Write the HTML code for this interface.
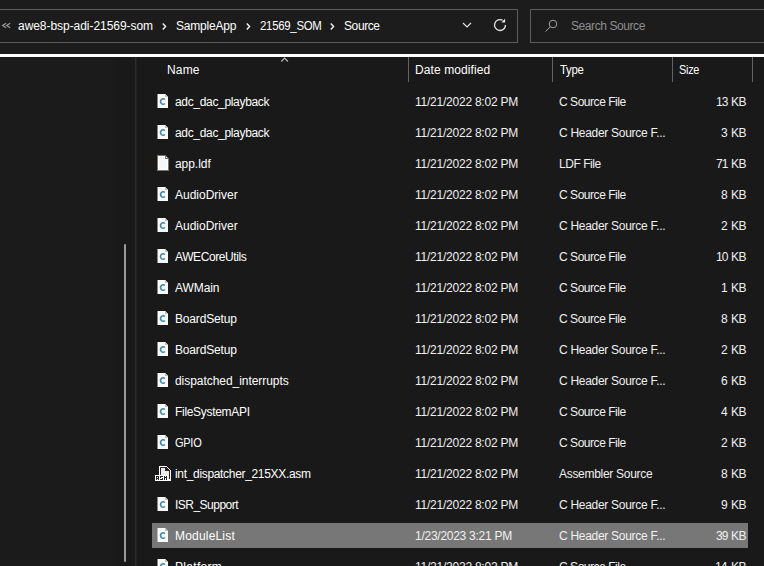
<!DOCTYPE html>
<html><head><meta charset="utf-8"><style>
*{margin:0;padding:0;box-sizing:border-box}
html,body{width:764px;height:566px;overflow:hidden;background:#1c1c1c;font-family:"Liberation Sans",sans-serif;font-size:12px;color:#fff}
.abs{position:absolute}
#crumb{position:absolute;left:-2px;top:9px;width:520px;height:34px;border:1px solid #5c5c5c;background:#1c1c1c}
#search{position:absolute;left:530px;top:9px;width:260px;height:34px;border:1px solid #5c5c5c;background:#1c1c1c}
#wline{position:absolute;left:0;top:54px;width:764px;height:3px;background:#fff}
#content{position:absolute;left:0;top:57px;width:764px;height:509px;background:#191919}
#navsep{position:absolute;left:134px;top:57px;width:3px;height:509px;background:linear-gradient(90deg,#1b1b1b 0,#1b1b1b 1px,#2b2b2b 1px,#2b2b2b 2px,#222 2px)}
#thumb{position:absolute;left:124px;top:244px;width:2px;height:318px;border-radius:1px;background:#9a9a9a}
.hd{position:absolute;line-height:14px;color:#fff;white-space:pre}
.csep{position:absolute;top:57px;width:1px;height:25px;background:#636363}
.selbar{position:absolute;left:152px;width:596px;height:25px;background:#777}
.t{position:absolute;line-height:14px;white-space:pre}
.nm{color:#fff}
.dt,.ty,.sz{color:#f0f0f0}
.icw{position:absolute;left:157px;margin-top:6px;width:11px;height:14px}
.icp{margin-top:5px;width:12px;height:16px}
.ica{left:153px;margin-top:4px;width:20px;height:20px}
.ic{display:block}
.bc{position:absolute;line-height:14px;color:#fff;white-space:pre}
</style></head><body>
<div id="crumb"></div>
<div id="search"></div>
<svg class="abs" style="left:0;top:0" width="764" height="54">
 <path d="M6.1 23.2L2.6 25.5L6.1 27.8M10.2 23.2L6.7 25.5L10.2 27.8" fill="none" stroke="#9a9a9a" stroke-width="1.2"/>
 <path d="M162.8 23.6L165.6 26.6L162.8 29.6" fill="none" stroke="#f2f2f2" stroke-width="1.4"/>
 <path d="M246.8 23.6L249.6 26.6L246.8 29.6" fill="none" stroke="#f2f2f2" stroke-width="1.4"/>
 <path d="M330.8 23.6L333.6 26.6L330.8 29.6" fill="none" stroke="#f2f2f2" stroke-width="1.4"/>
 <path d="M463 23L467 27L471 23" fill="none" stroke="#e8e8e8" stroke-width="1.1"/>
 <path d="M505.45 25A5.45 5.45 0 1 1 502.7 20.3" fill="none" stroke="#e6e6e6" stroke-width="1.3"/>
 <path d="M501.3 22.5L505.1 22.5L505.1 18.7Z" fill="#e6e6e6"/>
 <circle cx="553" cy="24" r="3.8" fill="none" stroke="#a0a0a0" stroke-width="1"/>
 <path d="M550.3 26.8L545.5 31.5" stroke="#a0a0a0" stroke-width="1"/>
</svg>
<div class="bc" style="left:18px;top:19px;letter-spacing:-0.048px">awe8-bsp-adi-21569-som</div>
<div class="bc" style="left:176px;top:19px;letter-spacing:-0.2px">SampleApp</div>
<div class="bc" style="left:260px;top:19px;letter-spacing:-0.3px;transform:scaleX(0.9516);transform-origin:0 0">21569_SOM</div>
<div class="bc" style="left:344px;top:19px;letter-spacing:-0.4px">Source</div>
<div class="bc" style="left:571px;top:19px;letter-spacing:-0.417px;color:#8e8e8e">Search Source</div>
<div id="wline"></div>
<div id="content"></div>
<div style="position:absolute;left:0;top:57px;width:116px;height:509px;background:#1b1b1b"></div>
<div id="navsep"></div>
<div id="thumb"></div>
<div class="hd" style="left:167px;top:63px;letter-spacing:0.167px">Name</div>
<svg class="abs" style="left:279px;top:55px" width="12" height="8"><path d="M2.3 6.5L5.6 3L8.9 6.5" fill="none" stroke="#bdbdbd" stroke-width="1.1"/></svg>
<div class="hd" style="left:415px;top:63px;letter-spacing:0.1px">Date modified</div>
<div class="hd" style="left:560px;top:63px;letter-spacing:-0.3px;transform:scaleX(0.948);transform-origin:0 0">Type</div>
<div class="hd" style="left:679px;top:63px;letter-spacing:-0.3px;transform:scaleX(0.9091);transform-origin:0 0">Size</div>
<div class="csep" style="left:408px"></div>
<div class="csep" style="left:552px"></div>
<div class="csep" style="left:672px"></div>
<div class="csep" style="left:752px"></div>
<div class="icw icc" style="top:88px"><svg class="ic" style="margin-left:0px;margin-top:0px" width="11" height="14" viewBox="0 0 11 14" shape-rendering="crispEdges"><rect x="0" y="0" width="1" height="14" fill="#f6f6f6" fill-opacity="0.5"/><path d="M1 0H8V3H11V14H1Z" fill="#fafafa"/><path d="M8 0L11 3H8Z" fill="#bdbdbd"/><path d="M7.9 5.55A2.5 2.75 0 1 0 7.9 9.45" fill="none" stroke="#3b88a8" stroke-width="1.5" shape-rendering="geometricPrecision"/></svg></div>
<div class="t nm" style="left:175px;top:95px;letter-spacing:-0.327px">adc_dac_playback</div>
<div class="t dt" style="left:415px;top:95px;letter-spacing:-0.235px">11/21/2022 8:02 PM</div>
<div class="t ty" style="left:559px;top:95px;letter-spacing:-0.458px">C Source File</div>
<div class="t sz" style="left:716px;top:95px;letter-spacing:-0.9px">13</div>
<div class="t sz" style="left:731px;top:95px;letter-spacing:-0.6px">KB</div>
<div class="icw icc" style="top:119px"><svg class="ic" style="margin-left:0px;margin-top:0px" width="11" height="14" viewBox="0 0 11 14" shape-rendering="crispEdges"><rect x="0" y="0" width="1" height="14" fill="#f6f6f6" fill-opacity="0.5"/><path d="M1 0H8V3H11V14H1Z" fill="#fafafa"/><path d="M8 0L11 3H8Z" fill="#bdbdbd"/><path d="M7.9 5.55A2.5 2.75 0 1 0 7.9 9.45" fill="none" stroke="#3b88a8" stroke-width="1.5" shape-rendering="geometricPrecision"/></svg></div>
<div class="t nm" style="left:175px;top:126px;letter-spacing:-0.327px">adc_dac_playback</div>
<div class="t dt" style="left:415px;top:126px;letter-spacing:-0.235px">11/21/2022 8:02 PM</div>
<div class="t ty" style="left:559px;top:126px;letter-spacing:-0.289px">C Header Source F...</div>
<div class="t sz" style="left:721px;top:126px;letter-spacing:-0.9px">3</div>
<div class="t sz" style="left:731px;top:126px;letter-spacing:-0.6px">KB</div>
<div class="icw icp" style="top:150px"><svg class="ic" width="12" height="16" viewBox="0 0 12 16" shape-rendering="crispEdges"><path d="M0 0H8L12 4V16H0Z" fill="#77726b"/><path d="M1 1H8V4H11V15H1Z" fill="#ffffff"/><path d="M2 2H7V5H10V14H2Z" fill="#f7f7f7"/><path d="M9 2L10 3V3H9Z" fill="#ffffff"/></svg></div>
<div class="t nm" style="left:175px;top:157px;letter-spacing:-0.05px">app.ldf</div>
<div class="t dt" style="left:415px;top:157px;letter-spacing:-0.235px">11/21/2022 8:02 PM</div>
<div class="t ty" style="left:559px;top:157px;letter-spacing:-0.457px">LDF File</div>
<div class="t sz" style="left:716px;top:157px;letter-spacing:-0.9px">71</div>
<div class="t sz" style="left:731px;top:157px;letter-spacing:-0.6px">KB</div>
<div class="icw icc" style="top:181px"><svg class="ic" style="margin-left:0px;margin-top:0px" width="11" height="14" viewBox="0 0 11 14" shape-rendering="crispEdges"><rect x="0" y="0" width="1" height="14" fill="#f6f6f6" fill-opacity="0.5"/><path d="M1 0H8V3H11V14H1Z" fill="#fafafa"/><path d="M8 0L11 3H8Z" fill="#bdbdbd"/><path d="M7.9 5.55A2.5 2.75 0 1 0 7.9 9.45" fill="none" stroke="#3b88a8" stroke-width="1.5" shape-rendering="geometricPrecision"/></svg></div>
<div class="t nm" style="left:175px;top:188px;letter-spacing:0.0px">AudioDriver</div>
<div class="t dt" style="left:415px;top:188px;letter-spacing:-0.235px">11/21/2022 8:02 PM</div>
<div class="t ty" style="left:559px;top:188px;letter-spacing:-0.458px">C Source File</div>
<div class="t sz" style="left:721px;top:188px;letter-spacing:-0.9px">8</div>
<div class="t sz" style="left:731px;top:188px;letter-spacing:-0.6px">KB</div>
<div class="icw icc" style="top:212px"><svg class="ic" style="margin-left:0px;margin-top:0px" width="11" height="14" viewBox="0 0 11 14" shape-rendering="crispEdges"><rect x="0" y="0" width="1" height="14" fill="#f6f6f6" fill-opacity="0.5"/><path d="M1 0H8V3H11V14H1Z" fill="#fafafa"/><path d="M8 0L11 3H8Z" fill="#bdbdbd"/><path d="M7.9 5.55A2.5 2.75 0 1 0 7.9 9.45" fill="none" stroke="#3b88a8" stroke-width="1.5" shape-rendering="geometricPrecision"/></svg></div>
<div class="t nm" style="left:175px;top:219px;letter-spacing:0.0px">AudioDriver</div>
<div class="t dt" style="left:415px;top:219px;letter-spacing:-0.235px">11/21/2022 8:02 PM</div>
<div class="t ty" style="left:559px;top:219px;letter-spacing:-0.289px">C Header Source F...</div>
<div class="t sz" style="left:721px;top:219px;letter-spacing:-0.9px">2</div>
<div class="t sz" style="left:731px;top:219px;letter-spacing:-0.6px">KB</div>
<div class="icw icc" style="top:243px"><svg class="ic" style="margin-left:0px;margin-top:0px" width="11" height="14" viewBox="0 0 11 14" shape-rendering="crispEdges"><rect x="0" y="0" width="1" height="14" fill="#f6f6f6" fill-opacity="0.5"/><path d="M1 0H8V3H11V14H1Z" fill="#fafafa"/><path d="M8 0L11 3H8Z" fill="#bdbdbd"/><path d="M7.9 5.55A2.5 2.75 0 1 0 7.9 9.45" fill="none" stroke="#3b88a8" stroke-width="1.5" shape-rendering="geometricPrecision"/></svg></div>
<div class="t nm" style="left:175px;top:250px;letter-spacing:-0.409px">AWECoreUtils</div>
<div class="t dt" style="left:415px;top:250px;letter-spacing:-0.235px">11/21/2022 8:02 PM</div>
<div class="t ty" style="left:559px;top:250px;letter-spacing:-0.458px">C Source File</div>
<div class="t sz" style="left:716px;top:250px;letter-spacing:-0.9px">10</div>
<div class="t sz" style="left:731px;top:250px;letter-spacing:-0.6px">KB</div>
<div class="icw icc" style="top:274px"><svg class="ic" style="margin-left:0px;margin-top:0px" width="11" height="14" viewBox="0 0 11 14" shape-rendering="crispEdges"><rect x="0" y="0" width="1" height="14" fill="#f6f6f6" fill-opacity="0.5"/><path d="M1 0H8V3H11V14H1Z" fill="#fafafa"/><path d="M8 0L11 3H8Z" fill="#bdbdbd"/><path d="M7.9 5.55A2.5 2.75 0 1 0 7.9 9.45" fill="none" stroke="#3b88a8" stroke-width="1.5" shape-rendering="geometricPrecision"/></svg></div>
<div class="t nm" style="left:175px;top:281px;letter-spacing:-0.08px">AWMain</div>
<div class="t dt" style="left:415px;top:281px;letter-spacing:-0.235px">11/21/2022 8:02 PM</div>
<div class="t ty" style="left:559px;top:281px;letter-spacing:-0.458px">C Source File</div>
<div class="t sz" style="left:721px;top:281px;letter-spacing:-0.9px">1</div>
<div class="t sz" style="left:731px;top:281px;letter-spacing:-0.6px">KB</div>
<div class="icw icc" style="top:305px"><svg class="ic" style="margin-left:0px;margin-top:0px" width="11" height="14" viewBox="0 0 11 14" shape-rendering="crispEdges"><rect x="0" y="0" width="1" height="14" fill="#f6f6f6" fill-opacity="0.5"/><path d="M1 0H8V3H11V14H1Z" fill="#fafafa"/><path d="M8 0L11 3H8Z" fill="#bdbdbd"/><path d="M7.9 5.55A2.5 2.75 0 1 0 7.9 9.45" fill="none" stroke="#3b88a8" stroke-width="1.5" shape-rendering="geometricPrecision"/></svg></div>
<div class="t nm" style="left:175px;top:312px;letter-spacing:-0.167px">BoardSetup</div>
<div class="t dt" style="left:415px;top:312px;letter-spacing:-0.235px">11/21/2022 8:02 PM</div>
<div class="t ty" style="left:559px;top:312px;letter-spacing:-0.458px">C Source File</div>
<div class="t sz" style="left:721px;top:312px;letter-spacing:-0.9px">8</div>
<div class="t sz" style="left:731px;top:312px;letter-spacing:-0.6px">KB</div>
<div class="icw icc" style="top:336px"><svg class="ic" style="margin-left:0px;margin-top:0px" width="11" height="14" viewBox="0 0 11 14" shape-rendering="crispEdges"><rect x="0" y="0" width="1" height="14" fill="#f6f6f6" fill-opacity="0.5"/><path d="M1 0H8V3H11V14H1Z" fill="#fafafa"/><path d="M8 0L11 3H8Z" fill="#bdbdbd"/><path d="M7.9 5.55A2.5 2.75 0 1 0 7.9 9.45" fill="none" stroke="#3b88a8" stroke-width="1.5" shape-rendering="geometricPrecision"/></svg></div>
<div class="t nm" style="left:175px;top:343px;letter-spacing:-0.167px">BoardSetup</div>
<div class="t dt" style="left:415px;top:343px;letter-spacing:-0.235px">11/21/2022 8:02 PM</div>
<div class="t ty" style="left:559px;top:343px;letter-spacing:-0.289px">C Header Source F...</div>
<div class="t sz" style="left:721px;top:343px;letter-spacing:-0.9px">2</div>
<div class="t sz" style="left:731px;top:343px;letter-spacing:-0.6px">KB</div>
<div class="icw icc" style="top:367px"><svg class="ic" style="margin-left:0px;margin-top:0px" width="11" height="14" viewBox="0 0 11 14" shape-rendering="crispEdges"><rect x="0" y="0" width="1" height="14" fill="#f6f6f6" fill-opacity="0.5"/><path d="M1 0H8V3H11V14H1Z" fill="#fafafa"/><path d="M8 0L11 3H8Z" fill="#bdbdbd"/><path d="M7.9 5.55A2.5 2.75 0 1 0 7.9 9.45" fill="none" stroke="#3b88a8" stroke-width="1.5" shape-rendering="geometricPrecision"/></svg></div>
<div class="t nm" style="left:175px;top:374px;letter-spacing:-0.05px">dispatched_interrupts</div>
<div class="t dt" style="left:415px;top:374px;letter-spacing:-0.235px">11/21/2022 8:02 PM</div>
<div class="t ty" style="left:559px;top:374px;letter-spacing:-0.289px">C Header Source F...</div>
<div class="t sz" style="left:721px;top:374px;letter-spacing:-0.9px">6</div>
<div class="t sz" style="left:731px;top:374px;letter-spacing:-0.6px">KB</div>
<div class="icw icc" style="top:398px"><svg class="ic" style="margin-left:0px;margin-top:0px" width="11" height="14" viewBox="0 0 11 14" shape-rendering="crispEdges"><rect x="0" y="0" width="1" height="14" fill="#f6f6f6" fill-opacity="0.5"/><path d="M1 0H8V3H11V14H1Z" fill="#fafafa"/><path d="M8 0L11 3H8Z" fill="#bdbdbd"/><path d="M7.9 5.55A2.5 2.75 0 1 0 7.9 9.45" fill="none" stroke="#3b88a8" stroke-width="1.5" shape-rendering="geometricPrecision"/></svg></div>
<div class="t nm" style="left:175px;top:405px;letter-spacing:-0.308px">FileSystemAPI</div>
<div class="t dt" style="left:415px;top:405px;letter-spacing:-0.235px">11/21/2022 8:02 PM</div>
<div class="t ty" style="left:559px;top:405px;letter-spacing:-0.458px">C Source File</div>
<div class="t sz" style="left:721px;top:405px;letter-spacing:-0.9px">4</div>
<div class="t sz" style="left:731px;top:405px;letter-spacing:-0.6px">KB</div>
<div class="icw icc" style="top:429px"><svg class="ic" style="margin-left:0px;margin-top:0px" width="11" height="14" viewBox="0 0 11 14" shape-rendering="crispEdges"><rect x="0" y="0" width="1" height="14" fill="#f6f6f6" fill-opacity="0.5"/><path d="M1 0H8V3H11V14H1Z" fill="#fafafa"/><path d="M8 0L11 3H8Z" fill="#bdbdbd"/><path d="M7.9 5.55A2.5 2.75 0 1 0 7.9 9.45" fill="none" stroke="#3b88a8" stroke-width="1.5" shape-rendering="geometricPrecision"/></svg></div>
<div class="t nm" style="left:175px;top:436px;letter-spacing:-0.3px;transform:scaleX(0.9172);transform-origin:0 0">GPIO</div>
<div class="t dt" style="left:415px;top:436px;letter-spacing:-0.235px">11/21/2022 8:02 PM</div>
<div class="t ty" style="left:559px;top:436px;letter-spacing:-0.458px">C Source File</div>
<div class="t sz" style="left:721px;top:436px;letter-spacing:-0.9px">2</div>
<div class="t sz" style="left:731px;top:436px;letter-spacing:-0.6px">KB</div>
<div class="icw ica" style="top:460px"><svg class="ic" width="20" height="20" viewBox="0 0 20 20" shape-rendering="crispEdges"><path d="M6 2H13L18 7V17H6Z" fill="#ffffff"/><path d="M7 3H13L17 7V15H7Z" fill="#262626"/><path d="M8 4H12V7H16V15H8Z" fill="#ececec"/><rect x="2" y="11" width="13" height="6" fill="#ffffff"/><path d="M3 12h1v1h-1zM4 12h1v1h-1zM5 12h1v1h-1zM3 13h1v1h-1zM5 13h1v1h-1zM3 14h1v1h-1zM4 14h1v1h-1zM5 14h1v1h-1zM3 15h1v1h-1zM5 15h1v1h-1zM7 12h1v1h-1zM8 12h1v1h-1zM9 12h1v1h-1zM7 13h1v1h-1zM9 14h1v1h-1zM7 15h1v1h-1zM8 15h1v1h-1zM9 15h1v1h-1zM11 12h1v1h-1zM13 12h1v1h-1zM11 13h1v1h-1zM12 13h1v1h-1zM13 13h1v1h-1zM11 14h1v1h-1zM13 14h1v1h-1zM11 15h1v1h-1zM13 15h1v1h-1z" fill="#222"/></svg></div>
<div class="t nm" style="left:175px;top:467px;letter-spacing:-0.326px">int_dispatcher_215XX.asm</div>
<div class="t dt" style="left:415px;top:467px;letter-spacing:-0.235px">11/21/2022 8:02 PM</div>
<div class="t ty" style="left:559px;top:467px;letter-spacing:-0.293px">Assembler Source</div>
<div class="t sz" style="left:721px;top:467px;letter-spacing:-0.9px">8</div>
<div class="t sz" style="left:731px;top:467px;letter-spacing:-0.6px">KB</div>
<div class="icw icc" style="top:491px"><svg class="ic" style="margin-left:0px;margin-top:0px" width="11" height="14" viewBox="0 0 11 14" shape-rendering="crispEdges"><rect x="0" y="0" width="1" height="14" fill="#f6f6f6" fill-opacity="0.5"/><path d="M1 0H8V3H11V14H1Z" fill="#fafafa"/><path d="M8 0L11 3H8Z" fill="#bdbdbd"/><path d="M7.9 5.55A2.5 2.75 0 1 0 7.9 9.45" fill="none" stroke="#3b88a8" stroke-width="1.5" shape-rendering="geometricPrecision"/></svg></div>
<div class="t nm" style="left:175px;top:498px;letter-spacing:-0.52px">ISR_Support</div>
<div class="t dt" style="left:415px;top:498px;letter-spacing:-0.235px">11/21/2022 8:02 PM</div>
<div class="t ty" style="left:559px;top:498px;letter-spacing:-0.289px">C Header Source F...</div>
<div class="t sz" style="left:721px;top:498px;letter-spacing:-0.9px">9</div>
<div class="t sz" style="left:731px;top:498px;letter-spacing:-0.6px">KB</div>
<div class="selbar" style="top:523px"></div>
<div class="icw icc" style="top:522px"><svg class="ic" style="margin-left:0px;margin-top:0px" width="11" height="14" viewBox="0 0 11 14" shape-rendering="crispEdges"><rect x="0" y="0" width="1" height="14" fill="#f6f6f6" fill-opacity="0.5"/><path d="M1 0H8V3H11V14H1Z" fill="#fafafa"/><path d="M8 0L11 3H8Z" fill="#bdbdbd"/><path d="M7.9 5.55A2.5 2.75 0 1 0 7.9 9.45" fill="none" stroke="#3b88a8" stroke-width="1.5" shape-rendering="geometricPrecision"/></svg></div>
<div class="t nm" style="left:175px;top:529px;letter-spacing:0.189px">ModuleList</div>
<div class="t dt" style="left:415px;top:529px;letter-spacing:-0.262px">1/23/2023 3:21 PM</div>
<div class="t ty" style="left:559px;top:529px;letter-spacing:-0.289px">C Header Source F...</div>
<div class="t sz" style="left:716px;top:529px;letter-spacing:-0.9px">39</div>
<div class="t sz" style="left:731px;top:529px;letter-spacing:-0.6px">KB</div>
<div class="icw icc" style="top:553px"><svg class="ic" style="margin-left:0px;margin-top:0px" width="11" height="14" viewBox="0 0 11 14" shape-rendering="crispEdges"><rect x="0" y="0" width="1" height="14" fill="#f6f6f6" fill-opacity="0.5"/><path d="M1 0H8V3H11V14H1Z" fill="#fafafa"/><path d="M8 0L11 3H8Z" fill="#bdbdbd"/><path d="M7.9 5.55A2.5 2.75 0 1 0 7.9 9.45" fill="none" stroke="#3b88a8" stroke-width="1.5" shape-rendering="geometricPrecision"/></svg></div>
<div class="t nm" style="left:175px;top:560px;letter-spacing:0.3px">Platform</div>
<div class="t dt" style="left:415px;top:560px;letter-spacing:-0.235px">11/21/2022 8:02 PM</div>
<div class="t ty" style="left:559px;top:560px;letter-spacing:-0.458px">C Source File</div>
<div class="t sz" style="left:715px;top:560px;letter-spacing:-0.9px">14</div>
<div class="t sz" style="left:731px;top:560px;letter-spacing:-0.6px">KB</div>
</body></html>
